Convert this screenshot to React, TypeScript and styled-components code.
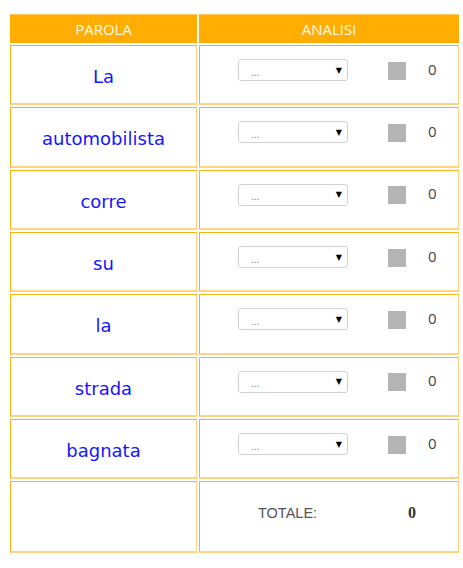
import React from "react";
import styled, { createGlobalStyle } from "styled-components";

const Global = createGlobalStyle`
  html, body { margin: 0; padding: 0; background: #ffffff; }
  body { font-family: "Open Sans", "Liberation Sans", sans-serif; }
`;

const Board = styled.div`
  display: grid;
  grid-template-columns: 187px 260px;
  grid-template-rows: 29px repeat(7, 60.33px) 72px;
  gap: 2px;
  padding: 14px 0 0 10px;
  width: max-content;
`;

const HeadCell = styled.div`
  background: #ffad00;
  border-top: 1px solid #ffc95c;
  color: #fffbf0;
  font-family: "Open Sans", "Liberation Sans", sans-serif;
  font-size: 15px;
  display: flex;
  align-items: center;
  justify-content: center;
`;

const Cell = styled.div`
  box-sizing: border-box;
  border: 1px solid #ffb10f;
  border-right-color: #ffd27e;
  border-bottom: 2px solid #ffd37f;
  background: #ffffff;
  display: flex;
  align-items: center;
`;

const WordCell = styled(Cell)`
  justify-content: center;
`;

const Word = styled.span`
  font-family: "DejaVu Sans", Verdana, sans-serif;
  font-size: 18px;
  color: #1515ff;
  margin-top: 4px;
`;

const AnalysisCell = styled(Cell)`
  padding-left: 38px;
  padding-bottom: 9px;
`;

const Select = styled.div`
  box-sizing: border-box;
  width: 110px;
  height: 22px;
  border: 1px solid #d2d2d2;
  border-radius: 3px;
  background: #ffffff;
  display: flex;
  align-items: center;
  justify-content: space-between;
  padding: 0 5px 0 12px;
`;

const Dots = styled.span`
  font-family: "Liberation Sans", Arial, sans-serif;
  font-size: 10px;
  color: #7a7a9a;
  margin-top: 4px;
`;

const Arrow = styled.span`
  font-size: 8px;
  color: #000000;
  font-family: "DejaVu Sans", sans-serif;
`;

const Square = styled.div`
  width: 18px;
  height: 18px;
  background: #b4b4b4;
  margin-left: 40px;
  margin-top: 1px;
`;

const Score = styled.span`
  font-family: "Open Sans", "Liberation Sans", sans-serif;
  font-size: 15px;
  color: #444444;
  margin-left: 22px;
  margin-top: -3px;
`;

const TotalCell = styled(Cell)`
  padding-left: 58px;
`;

const TotalLabel = styled.span`
  font-family: "Liberation Sans", Arial, sans-serif;
  font-size: 14.5px;
  color: #555555;
  margin-top: -8px;
`;

const TotalValue = styled.span`
  font-family: "Liberation Serif", "Times New Roman", serif;
  font-weight: bold;
  font-size: 16px;
  color: #333333;
  margin-left: 91px;
  margin-top: -8px;
`;

const words = ["La", "automobilista", "corre", "su", "la", "strada", "bagnata"];

export default function App() {
  return (
    <>
      <Global />
      <Board>
        <HeadCell>PAROLA</HeadCell>
        <HeadCell>ANALISI</HeadCell>
        {words.map((w) => (
          <React.Fragment key={w}>
            <WordCell>
              <Word>{w}</Word>
            </WordCell>
            <AnalysisCell>
              <Select>
                <Dots>...</Dots>
                <Arrow>▼</Arrow>
              </Select>
              <Square />
              <Score>0</Score>
            </AnalysisCell>
          </React.Fragment>
        ))}
        <Cell />
        <TotalCell>
          <TotalLabel>TOTALE:</TotalLabel>
          <TotalValue>0</TotalValue>
        </TotalCell>
      </Board>
    </>
  );
}
